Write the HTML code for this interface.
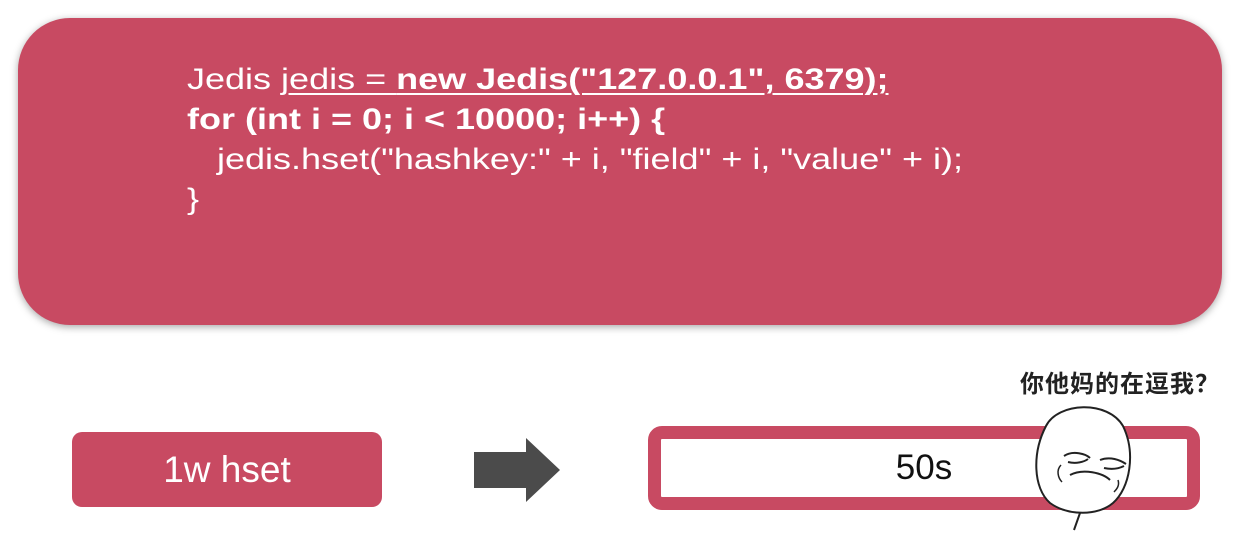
<!DOCTYPE html>
<html><head><meta charset="utf-8"><style>
body{margin:0;width:1250px;height:552px;background:#fff;position:relative;overflow:hidden;font-family:"Liberation Sans","Noto Sans CJK SC",sans-serif}
.big{position:absolute;left:18px;top:18px;width:1204px;height:307px;background:#c84a62;border-radius:52px;box-shadow:0 2px 8px rgba(0,0,0,.35)}
.code{position:absolute;left:187px;top:60px;color:#fff;font-size:30px;line-height:40px;white-space:pre;transform:scaleX(1.2);transform-origin:0 0}
.code b{font-weight:bold}
.u{text-decoration:underline;text-underline-offset:4px;text-decoration-thickness:2px}
.b1{position:absolute;left:72px;top:432px;width:310px;height:75px;background:#c84a62;border-radius:10px;color:#fff;font-size:37px;text-align:center;line-height:75px}
.res{position:absolute;left:648px;top:426px;width:526px;height:58px;border:13px solid #c84a62;border-radius:14px;background:#fff;font-size:35px;text-align:center;line-height:58px;color:#111}
.txt{position:absolute;left:1020px;top:364px;font-size:24px;font-weight:bold;color:#222;letter-spacing:1px}
</style></head><body>
<div class="big"></div>
<div class="code">Jedis <span class="u">jedis = <b>new Jedis("127.0.0.1", 6379);</b></span>
<b>for (int i = 0; i &lt; 10000; i++) {</b>
   jedis.hset("hashkey:" + i, "field" + i, "value" + i);
}</div>
<div class="b1">1w hset</div>
<svg style="position:absolute;left:470px;top:436px" width="92" height="68"><polygon points="4,16 56,16 56,2 90,34 56,66 56,52 4,52" fill="#4b4b4b"/></svg>
<div class="res">50s</div>
<svg style="position:absolute;left:1028px;top:398px" width="110" height="150" viewBox="0 0 110 150">
<path d="M18,28 C30,4 80,2 95,28 C108,55 102,90 85,105 C70,118 40,118 22,105 C5,90 4,55 18,28Z" fill="#fff" stroke="#222" stroke-width="2"/>
<path d="M36,58 C45,52 58,56 62,60 M40,64 C48,66 56,64 60,61" fill="none" stroke="#222" stroke-width="2"/>
<path d="M72,62 C82,58 92,62 98,66 M76,70 C85,72 92,70 96,68" fill="none" stroke="#222" stroke-width="2"/>
<path d="M42,77 C55,70 75,75 82,82" fill="none" stroke="#222" stroke-width="2"/>
<path d="M33,67 C28,72 30,80 34,84 M90,82 C92,88 88,92 86,94" fill="none" stroke="#222" stroke-width="1.5"/>
<path d="M52,115 L46,132" stroke="#222" stroke-width="2"/>
</svg>
<div class="txt">你他妈的在逗我？</div>
</body></html>
